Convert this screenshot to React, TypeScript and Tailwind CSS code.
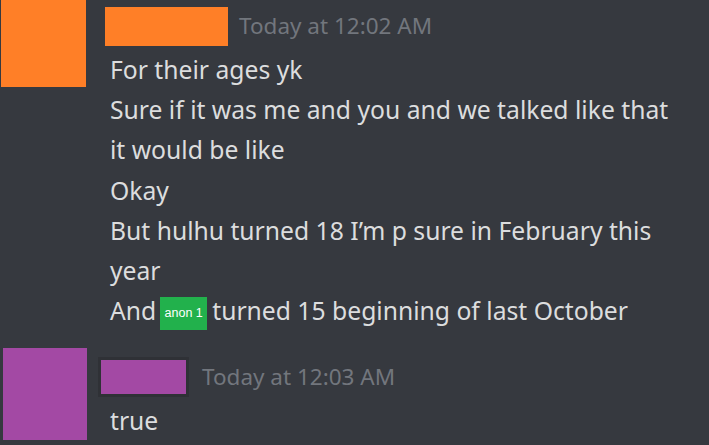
import React from "react";

export default function App() {
  const font = { fontFamily: '"Noto Sans", "Open Sans", sans-serif' };
  return (
    <div
      className="w-[709px] h-[445px] bg-[#36393f] overflow-hidden text-[#dcddde]"
      style={font}
    >
      {/* Message group 1 */}
      <div className="flex">
        <div className="ml-[1px] w-[85px] h-[87px] bg-[#ff7f27] shrink-0" />
        <div className="ml-[19px] flex flex-col">
          <div className="flex items-center h-[50px] pt-[2px]">
            <div className="w-[123px] h-[39px] bg-[#ff7f27]" />
            <span className="ml-[11px] text-[22.5px] text-[#72767d] leading-none">
              Today at 12:02 AM
            </span>
          </div>
          <div className="pl-[5px] text-[24.7px] leading-[40.2px]">
            <div>For their ages yk</div>
            <div>Sure if it was me and you and we talked like that</div>
            <div>it would be like</div>
            <div>Okay</div>
            <div>But hulhu turned 18 I’m p sure in February this</div>
            <div>year</div>
            <div className="flex items-start">
              <span>And</span>
              <span
                className="mt-[6px] ml-[4px] mr-[5px] inline-flex items-center justify-center w-[47px] h-[33px] bg-[#22b14c] text-white text-[12.5px] leading-none"
                style={{ fontFamily: '"Liberation Sans", Arial, sans-serif' }}
              >
                anon 1
              </span>
              <span>turned 15 beginning of last October</span>
            </div>
          </div>
        </div>
      </div>

      {/* Message group 2 */}
      <div className="flex mt-[17px]">
        <div className="ml-[3px] w-[84px] h-[92px] bg-[#a349a4] shrink-0" />
        <div className="ml-[14px] flex flex-col">
          <div className="flex items-center h-[52px] pt-[5px]">
            <div className="w-[85px] h-[34px] bg-[#a349a4] outline outline-[3px] outline-[#2f3136]" />
            <span className="ml-[16px] text-[22.5px] text-[#72767d] leading-none">
              Today at 12:03 AM
            </span>
          </div>
          <div className="pl-[9px] text-[24.7px] leading-[40px] mt-[1px]">true</div>
        </div>
      </div>
    </div>
  );
}
